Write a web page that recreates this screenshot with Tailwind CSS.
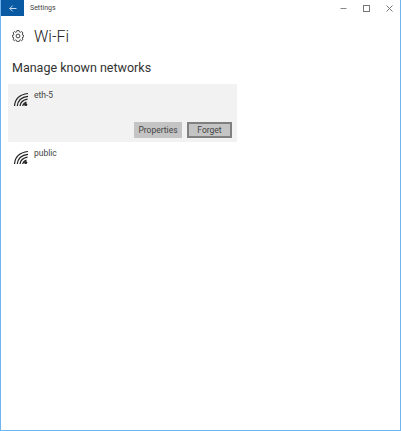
<!DOCTYPE html>
<html lang="en">
<head>
  <meta charset="UTF-8" />
  <title>Settings</title>
  <script src="https://cdn.jsdelivr.net/npm/@tailwindcss/browser@4"></script>
</head>
<body class="bg-white font-['Roboto',sans-serif]">
  <div class="h-[431px] w-[401px] border border-t-0 border-[#70b5ee] bg-white overflow-hidden flex flex-col">

    <!-- Title bar -->
    <div class="flex items-center h-4">
      <div class="w-[23px] h-4 bg-[#0a5aa3] flex items-center justify-center">
        <svg width="8" height="7" viewBox="0 0 8 7" fill="none" stroke="#dce9f5" stroke-width="0.9"><path d="M7.5 3.5H0.8M3.7 0.6L0.8 3.5L3.7 6.4"/></svg>
      </div>
      <span class="ml-[6px] text-[7px] leading-none text-[#444]">Settings</span>
      <div class="ml-auto flex items-center gap-4 pr-[7px]">
        <svg width="7" height="7" viewBox="0 0 7 7" fill="none" stroke="#888" stroke-width="1"><path d="M0.5 3.5H6.5"/></svg>
        <svg width="7" height="7" viewBox="0 0 7 7" fill="none" stroke="#777" stroke-width="1"><rect x="0.5" y="0.5" width="6" height="6"/></svg>
        <svg width="7" height="7" viewBox="0 0 7 7" fill="none" stroke="#777" stroke-width="1"><path d="M0.5 0.5L6.5 6.5M6.5 0.5L0.5 6.5"/></svg>
      </div>
    </div>

    <!-- Heading -->
    <div class="flex items-center h-[20px] mt-[10px] pl-[11px]">
      <svg width="12" height="12" viewBox="0 0 12 12" fill="none" stroke="#444" stroke-width="1">
        <circle cx="6" cy="6" r="1.9"/>
        <path d="M5 .8h2l.3 1.4 1.1.5 1.2-.8 1.4 1.4-.8 1.2.5 1.1 1.4.3v1.2l-1.4.3-.5 1.1.8 1.2-1.4 1.4-1.2-.8-1.1.5-.3 1.4H5l-.3-1.4-1.1-.5-1.2.8L1 9.8l.8-1.2-.5-1.1L0 7.2V5.9l1.4-.3.5-1.1L1 3.3l1.4-1.4 1.2.8 1.1-.5z" transform="translate(0 -.4)"/>
      </svg>
      <h1 class="ml-[10px] mt-[2px] text-[16px] leading-none font-light text-[#222]">Wi-Fi</h1>
    </div>

    <h2 class="mt-[14px] ml-[11px] text-[12.5px] leading-[16px] text-[#333]">Manage known networks</h2>

    <!-- Networks -->
    <div class="mt-2 ml-[7px] w-[229px]">
      <div class="h-[58px] bg-[#f2f2f2] flex flex-col">
        <div class="flex pl-[5px] pt-2">
          <svg width="16" height="16" viewBox="0 0 16 16" fill="none" stroke="#222" stroke-width="1.2">
            <circle cx="12.7" cy="12.5" r="1.6" fill="#222" stroke="none"/>
            <path d="M1.5 14C2 7 7 2.5 15 1.5M4.3 14C4.8 8.7 8.5 5 15 4.3M7 14C7.4 10.5 10 8 14.5 7.2M9.7 14C10 12.5 11 11 13.5 10"/>
          </svg>
          <span class="ml-[5px] -mt-[3px] text-[8.5px] leading-[12px] text-[#444]">eth-5</span>
        </div>
        <div class="mt-auto flex justify-end gap-[5px] pr-[5px] pb-1">
          <button class="h-4 w-[48px] bg-[#c4c4c4] text-[8.5px] leading-none text-[#444]">Properties</button>
          <button class="h-4 w-[45px] bg-[#c4c4c4] border-2 border-[#808080] text-[8.5px] leading-none text-[#444]">Forget</button>
        </div>
      </div>
      <div class="flex pl-[5px] pt-2">
        <svg width="16" height="16" viewBox="0 0 16 16" fill="none" stroke="#222" stroke-width="1.2">
          <circle cx="12.7" cy="12.5" r="1.6" fill="#222" stroke="none"/>
          <path d="M1.5 14C2 7 7 2.5 15 1.5M4.3 14C4.8 8.7 8.5 5 15 4.3M7 14C7.4 10.5 10 8 14.5 7.2M9.7 14C10 12.5 11 11 13.5 10"/>
        </svg>
        <span class="ml-[5px] -mt-[3px] text-[8.5px] leading-[12px] text-[#444]">public</span>
      </div>
    </div>
  </div>
</body>
</html>
